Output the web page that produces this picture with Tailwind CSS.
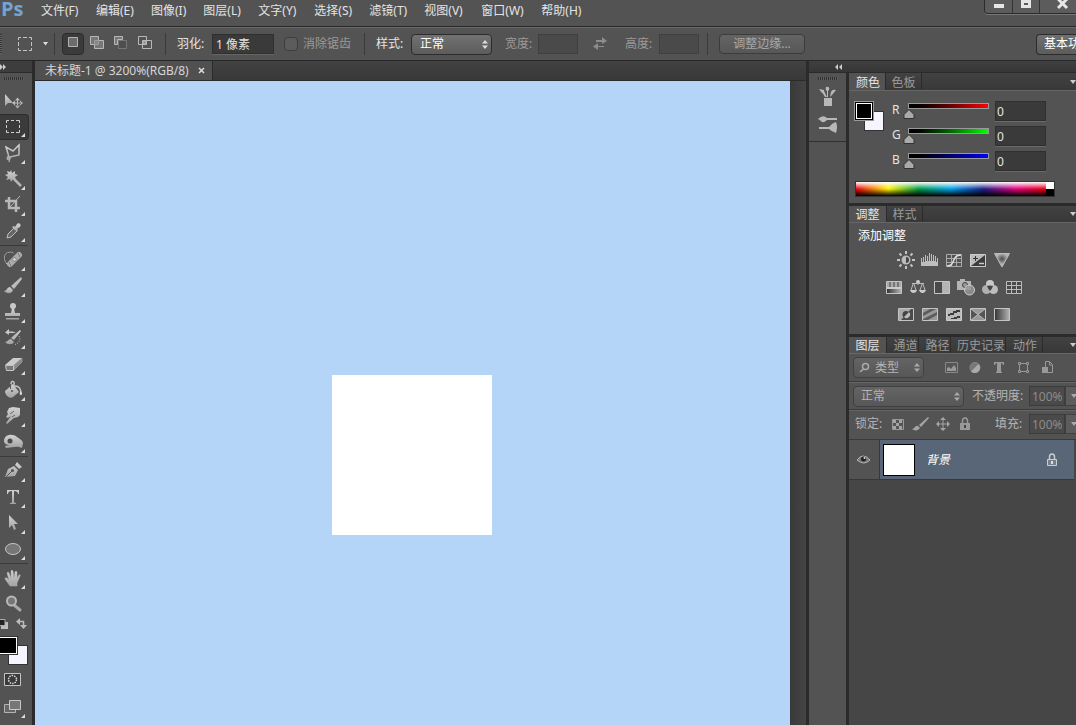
<!DOCTYPE html>
<html lang="zh-CN">
<head>
  <meta charset="UTF-8" />
  <meta name="viewport" content="width=device-width, initial-scale=1" />
  <title>未标题-1 @ 3200%(RGB/8)</title>
  <script src="https://cdn.jsdelivr.net/npm/@tailwindcss/browser@4"></script>
</head>
<body class="h-screen flex flex-col overflow-hidden bg-[#535353] text-[#e4e4e4] text-xs font-['Noto_Sans','Noto_Sans_CJK_SC',sans-serif]">

  <!-- Shared gradients for the icons -->
  <svg class="absolute size-0" aria-hidden="true">
    <defs>
      <linearGradient id="metal" x1="0" y1="0" x2="0" y2="1"><stop offset="0" stop-color="#d2d2d2" /><stop offset="1" stop-color="#a2a2a2" /></linearGradient>
      <linearGradient id="fade" x1="0" y1="0" x2="1" y2="0"><stop offset="0" stop-color="#333" /><stop offset="1" stop-color="#b4b4b4" /></linearGradient>
      <radialGradient id="vib" cx=".5" cy=".4"><stop offset="0" stop-color="#4a4a4a" /><stop offset=".8" stop-color="#b4b4b4" /></radialGradient>
    </defs>
  </svg>

  <!-- Menu bar -->
  <header class="flex h-[27px] shrink-0 border-b border-[#282828]">
    <div class="w-[41px] pl-px text-xl leading-[18px] font-bold text-[#75a3d3] font-['Open_Sans',sans-serif]">Ps</div>
    <nav class="flex items-center gap-[17px] pb-1 text-left whitespace-nowrap">
      <button class="min-w-[38px] text-left">文件(F)</button>
      <button class="min-w-[38px] text-left">编辑(E)</button>
      <button class="text-left">图像(I)</button>
      <button class="min-w-[38px] text-left">图层(L)</button>
      <button class="min-w-[39px] text-left">文字(Y)</button>
      <button class="min-w-[38px] text-left">选择(S)</button>
      <button class="min-w-[38px] text-left">滤镜(T)</button>
      <button class="min-w-10 text-left">视图(V)</button>
      <button class="min-w-[43px] text-left">窗口(W)</button>
      <button class="min-w-10 text-left">帮助(H)</button>
    </nav>
    <div class="ml-auto flex h-[14px] w-[92px] overflow-hidden rounded-bl border-b border-l border-[#2c2c2c] shadow-[0_1px_0_#777]">
      <button class="w-7 shrink-0 border-r border-[#333] bg-[#5c5c5c]" aria-label="最小化"><svg class="mx-auto" width="12" height="13"><path d="M1 4h10v4H1z" fill="#e6e6e6" /></svg></button>
      <button class="w-[27px] shrink-0 border-r border-[#333] bg-[#5c5c5c]" aria-label="最大化"><svg class="mx-auto" width="12" height="13"><path d="M1 0h10v8H1zM4 3v2h4V3z" fill="#e6e6e6" fill-rule="evenodd" /></svg></button>
      <button class="w-[46px] shrink-0 bg-[#5c5c5c]" aria-label="关闭"><svg class="mx-auto" width="12" height="13"><path d="M1 -1l9 9M10 -1l-9 9" stroke="#e6e6e6" stroke-width="3" /></svg></button>
    </div>
  </header>

  <!-- Options bar -->
  <section class="flex h-[34px] shrink-0 items-center border-t border-b border-t-[#6a6a6a] border-b-[#282828] whitespace-nowrap">
    <div class="h-5 w-[2px] bg-[repeating-linear-gradient(#333_0_1px,#666_1px_2px)]"></div>
    <svg class="ml-4" width="14" height="14" fill="none" stroke="#c4c4c4"><path d="M.5 3V.5H3M5 .5h4M11 .5h2.500V3M13.500 5v4M13.500 11v2.500H11M9 13.500H5M3 13.500H.5V11M.5 9V5" /></svg>
    <svg class="ml-[11px]" width="5" height="4"><path d="M0 0h5L2.500 3.500z" fill="#ddd" /></svg>
    <div class="ml-1.5 h-[22px] w-px bg-[#3a3a3a]"></div>
    <button class="ml-[7px] grid h-[22px] w-[22px] place-items-center rounded-sm border border-[#2c2c2c] bg-[#3b3b3b]" aria-label="新选区"><svg width="10" height="14"><path d="M.5 .5h9v9h-9z" fill="#6c6c6c" stroke="#b4b4b4" /></svg></button>
    <button class="ml-1.5 pb-0.5" aria-label="添加到选区"><svg width="14" height="14" stroke="#b8b8b8"><path d="M.5.5h8v4h5v8h-9v-4h-4z" fill="#777" /><path d="M4.500 8.500v-4h4v4z" fill="#888" stroke="#999" /></svg></button>
    <button class="ml-2.5 pb-0.5" aria-label="从选区减去"><svg width="14" height="14"><path d="M.5.500h8v3h-5v5h-3z" fill="#777" stroke="#b8b8b8" /><path d="M4.500 4.500h8v8h-8z" fill="#4e4e4e" stroke="#777" /></svg></button>
    <button class="ml-2.5 pb-0.5" aria-label="与选区交叉"><svg width="14" height="14" fill="none" stroke="#b8b8b8"><path d="M5 5h3v3H5z" fill="#888" /><path d="M.5.5h8v8h-8zM4.500 4.500h9v8h-9z" /></svg></button>
    <div class="ml-[13px] h-[22px] w-px bg-[#3a3a3a]"></div>
    <label for="feather" class="ml-[11px] w-[35px]">羽化:</label>
    <input id="feather" value="1 像素" class="h-5 w-[62px] border border-[#2f2f2f] bg-[#3a3a3a] px-[3px] shadow-[0_1px_0_#666]" />
    <input id="aa" type="checkbox" disabled class="ml-2.5 size-[14px] appearance-none rounded-sm border border-[#3c3c3c] bg-[#5c5c5c]" />
    <label for="aa" class="ml-[5px] w-[61px] text-[#9a9a9a]">消除锯齿</label>
    <div class="h-[22px] w-px bg-[#3a3a3a]"></div>
    <label for="style" class="ml-[11px] w-[35px]">样式:</label>
    <div class="relative">
      <select id="style" class="h-[21px] w-[81px] appearance-none rounded-sm border border-[#2c2c2c] bg-linear-to-b from-[#727272] to-[#5c5c5c] pl-2 text-white"><option>正常</option></select>
      <svg class="pointer-events-none absolute top-[6px] right-1" width="6" height="9" fill="#ddd"><path d="M0 3.500L3 0l3 3.500zM0 5.500h6L3 9z" /></svg>
    </div>
    <label for="w" class="ml-[13px] w-[33px] text-[#9a9a9a]">宽度:</label>
    <input id="w" disabled class="h-5 w-10 border border-[#404040] bg-[#4a4a4a]" />
    <button class="ml-[15px] pb-0.5" aria-label="交换高度和宽度"><svg width="14" height="13" fill="#8c8c8c"><path d="M3 3h6V0l5 4-5 3V5H3zM11 9H5V6L0 9.500 5 13v-3h6z" /></svg></button>
    <label for="h" class="ml-[18px] w-[34px] text-[#9a9a9a]">高度:</label>
    <input id="h" disabled class="h-5 w-10 border border-[#404040] bg-[#4a4a4a]" />
    <div class="ml-2 h-[22px] w-px bg-[#3a3a3a]"></div>
    <button class="ml-[11px] h-5 w-[86px] rounded-sm border border-[#3c3c3c] bg-linear-to-b from-[#646464] to-[#575757] leading-4 text-[#a8a8a8]">调整边缘...</button>
    <button class="ml-auto h-[21px] w-10 overflow-hidden rounded-l-sm border border-r-0 border-[#2c2c2c] bg-linear-to-b from-[#707070] to-[#5c5c5c] pl-[7px] text-left text-white">基本功</button>
  </section>

  <main class="flex min-h-0 flex-1">

    <!-- Toolbar -->
    <aside class="flex w-[35px] shrink-0 flex-col border-r-[3px] border-[#2b2b2b]">
      <div class="h-3 shrink-0 border-b border-[#2b2b2b] bg-[#3d3d3d] pt-[3px]"><svg width="7" height="6" fill="#ccc"><path d="M0 0l3 3-3 3zM3 0l3 3-3 3z" /></svg></div>
      <div class="h-[15px] shrink-0 pt-1 pl-1"><div class="h-[3px] w-5 bg-[repeating-linear-gradient(90deg,#303030_0_1px,#5e5e5e_1px_2px)]"></div></div>

      <button class="h-[26px] pt-0.5 pl-1" aria-label="移动工具"><svg width="22" height="22" viewBox="0 0 22 22"><path d="M1 3v12l3-3h5z" fill="url(#metal)" /><path d="M13.500 6.500l2.500 3h-5zM13.500 17.500l2.500-3h-5zM8 12l3-2.500v5zM19 12l-3-2.500v5zM10 11.500h7v1h-7zM13 8.500h1v7h-1z" fill="#bbb" /></svg></button>
      <button class="h-[26px] w-[29px] rounded-r-sm border border-l-0 border-[#2e2e2e] bg-[#3b3b3b] pl-1" aria-label="矩形选框工具"><svg width="22" height="22" viewBox="0 0 22 22"><path d="M2.500 7V4.500H5M7 4.500h3M12 4.500h3.500V7M15.500 9v3M15.500 14v2.500H12M10 16.500H7M5 16.500H2.500V14M2.500 12v-3" fill="none" stroke="#d0d0d0" /><path d="M21 17v4h-4z" fill="#ddd" /></svg></button>
      <button class="h-[26px] pt-0.5 pl-1" aria-label="多边形套索工具"><svg width="22" height="22" viewBox="0 0 22 22"><path d="M5 14L2 4l7 4 6-6v10l-9 2c-3 0-4 3-1 2s0-3-2-2m3 0l-1 5" fill="none" stroke="url(#metal)" stroke-width="1.500" /><path d="M21 17v4h-4z" fill="#ddd" /></svg></button>
      <button class="h-[26px] pt-0.5 pl-1" aria-label="魔棒工具"><svg width="22" height="22" viewBox="0 0 22 22"><path d="M7 1l1 3 3-2v3l3 1-3 2 1 3-3-1-2 3-1-3-4 1 2-3-3-2 3-1-1-3 3 1z" fill="url(#metal)" /><path d="M9 9l8 8" stroke="#b4b4b4" stroke-width="2.500" /><path d="M21 17v4h-4z" fill="#ddd" /></svg></button>
      <button class="h-[26px] pt-0.5 pl-1" aria-label="裁剪工具"><svg width="22" height="22" viewBox="0 0 22 22"><path d="M5 2v11h11M1 6h11v11" fill="none" stroke="#b8b8b8" stroke-width="2.500" /><path d="M16 1L6 12" stroke="#b8b8b8" /><path d="M21 17v4h-4z" fill="#ddd" /></svg></button>
      <button class="h-[26px] pt-0.5 pl-1" aria-label="吸管工具"><svg width="22" height="22" viewBox="0 0 22 22"><path d="M3 17l1-4 6-6 3 3-6 6z" fill="#666" stroke="#c0c0c0" /><path d="M8 6l2-1 1 1 2-3c2-2 5 1 3 3l-3 2 1 1-1 2z" fill="url(#metal)" /><path d="M21 17v4h-4z" fill="#ddd" /></svg></button>
      <div class="my-px h-px w-7 shrink-0 bg-[#3a3a3a]"></div>
      <button class="h-[26px] pt-0.5 pl-1" aria-label="污点修复画笔工具"><svg width="22" height="22" viewBox="0 0 22 22"><path d="M3 14C-1 10 0 3 4 2.500q4-1 6 1" fill="none" stroke="#ddd" stroke-dasharray="1 1" /><path d="M6 14L15 5" stroke="#aaa" stroke-width="6" stroke-linecap="round" /><path d="M8 9.500l2.500-2.500 2.500 2.500-2.500 2.500z" fill="#ccc" stroke="#808080" /><path d="M5 13h1M6 15h1M14 4h1M15 6h1" stroke="#555" /><path d="M21 17v4h-4z" fill="#ddd" /></svg></button>
      <button class="h-[26px] pt-0.5 pl-1" aria-label="画笔工具"><svg width="22" height="22" viewBox="0 0 22 22"><path d="M17 1l1 2-8 10-3-3z" fill="#bbb" /><path d="M0 15c3 0 3-4 6-4l3 3c-1 4-6 4-9 1z" fill="url(#metal)" /><path d="M21 17v4h-4z" fill="#ddd" /></svg></button>
      <button class="h-[26px] pt-0.5 pl-1" aria-label="仿制图章工具"><svg width="22" height="22" viewBox="0 0 22 22"><circle cx="9" cy="4" r="3" fill="#c8c8c8" /><path d="M8 6h2l1 5h5v3H1v-3h6zM2 16h13v1.500H2z" fill="url(#metal)" /><path d="M21 17v4h-4z" fill="#ddd" /></svg></button>
      <button class="h-[26px] pt-0.5 pl-1" aria-label="历史记录画笔工具"><svg width="22" height="22" viewBox="0 0 22 22"><path d="M5 1v2.500h4l3 1.500H5v2L1 4.500zM16 2l1 1-7 9-3-2zM1 14c3 0 3-3 6-3l3 3c-2 3-6 3-9 0z" fill="url(#metal)" /><path d="M15 8q3 6-5 9" fill="none" stroke="#ccc" stroke-dasharray="1 1.500" /><path d="M21 17v4h-4z" fill="#ddd" /></svg></button>
      <button class="h-[26px] pt-0.5 pl-1" aria-label="橡皮擦工具"><svg width="22" height="22" viewBox="0 0 22 22"><path d="M1 11L9 4h9l-8 7z" fill="#ccc" /><path d="M10 11l8-7v4l-8 8z" fill="#888" stroke="#bbb" stroke-width=".5" /><path d="M1.500 11.500h8v5h-7z" fill="#777" stroke="#c4c4c4" /><path d="M21 17v4h-4z" fill="#ddd" /></svg></button>
      <button class="h-[26px] pt-0.5 pl-1" aria-label="油漆桶工具"><svg width="22" height="22" viewBox="0 0 22 22"><path d="M1 11l8-7 6 8-6 5c-3 2-8-1-8-6z" fill="url(#metal)" /><path d="M7 11V4c0-4 4-3 3 0v4M11 6c4 0 6 2 6 8" fill="none" stroke="#c4c4c4" stroke-width="1.500" /><path d="M6.500 4v5" stroke="#555" /><circle cx="8" cy="11" r="1" fill="#555" /><path d="M17 11q2 4 0 4t-1-3z" fill="#ddd" /><path d="M21 17v4h-4z" fill="#ddd" /></svg></button>
      <button class="h-[26px] pt-0.5 pl-1" aria-label="涂抹工具"><svg width="22" height="22" viewBox="0 0 22 22"><path d="M3 6l2-4 4-1 7 1v7l-2 2-4 1-7 6-1-1 5-7-3 2-2-1 2-3z" fill="url(#metal)" /><path d="M6 8l4-3M8 11l3-2" stroke="#666" /><path d="M21 17v4h-4z" fill="#ddd" /></svg></button>
      <button class="h-[26px] pt-0.5 pl-1" aria-label="加深工具"><svg width="22" height="22" viewBox="0 0 22 22"><path d="M0 9c0-7 9-8 13-4 3 2 6 4 6 6l-1 5c-4-2-7-1-8-1l-8 1-1-2 5-1c-3 0-6-1-6-4z" fill="url(#metal)" /><circle cx="6" cy="9" r="2.500" fill="#4a4a4a" /><path d="M21 17v4h-4z" fill="#ddd" /></svg></button>
      <div class="my-px h-px w-7 shrink-0 bg-[#3a3a3a]"></div>
      <button class="h-[26px] pt-0.5 pl-1" aria-label="钢笔工具"><svg width="22" height="22" viewBox="0 0 22 22"><path d="M1 16l3-8 6-3 4 4-3 6zM11 4l2-3 5 5-3 2z" fill="url(#metal)" /><path d="M2 16l6-6" stroke="#555" /><circle cx="8.500" cy="9.500" r="1.500" fill="#555" /><path d="M21 17v4h-4z" fill="#ddd" /></svg></button>
      <button class="h-[26px] pt-0.5 pl-1" aria-label="横排文字工具"><svg width="22" height="22" viewBox="0 0 22 22"><path d="M3 3h12v4h-1q0-3-4-3v11q0 1 2 1v1H6v-1q2 0 2-1V4Q4 4 4 7H3z" fill="url(#metal)" /><path d="M21 17v4h-4z" fill="#ddd" /></svg></button>
      <button class="h-[26px] pt-0.5 pl-1" aria-label="路径选择工具"><svg width="22" height="22" viewBox="0 0 22 22"><path d="M5 2v13l3-3 2 5 2-1-2-5h4z" fill="url(#metal)" /><path d="M21 17v4h-4z" fill="#ddd" /></svg></button>
      <button class="h-[26px] pt-0.5 pl-1" aria-label="椭圆工具"><svg width="22" height="22" viewBox="0 0 22 22"><ellipse cx="9" cy="10" rx="7.500" ry="5.500" fill="#777" stroke="#c4c4c4" /><path d="M21 17v4h-4z" fill="#ddd" /></svg></button>
      <div class="my-px h-px w-7 shrink-0 bg-[#3a3a3a]"></div>
      <button class="h-[26px] pt-0.5 pl-1" aria-label="抓手工具"><svg width="22" height="22" viewBox="0 0 22 22"><path d="M6 18L1 11q0-2 2-1l2 2-2-7q1-2 2 0l2 5V3q1-2 2 0l1 7 1-6q1-2 2 0v6l2-3q2-1 1 1l-3 7v3z" fill="url(#metal)" stroke="#b0b0b0" stroke-width=".5" /><path d="M21 17v4h-4z" fill="#ddd" /></svg></button>
      <button class="h-[26px] pt-0.5 pl-1" aria-label="缩放工具"><svg width="22" height="22" viewBox="0 0 22 22"><path d="M10 11l6 5" stroke="#a8a8a8" stroke-width="3" stroke-linecap="round" /><circle cx="7.500" cy="7" r="4.500" fill="#777" stroke="#b8b8b8" stroke-width="2" /></svg></button>
      <div class="flex h-[19px] shrink-0 items-start gap-2">
        <button aria-label="默认颜色"><svg width="8" height="14"><path d="M1 5h7v7H1z" fill="#bbb" /><path d="M-1 2.500h6v6h-6z" fill="#222" stroke="#aaa" /></svg></button>
        <button aria-label="切换颜色"><svg width="11" height="14" fill="#bbb"><path d="M0 4.500L4 1v7zM11 8L7.500 12 4 8z" /><path d="M3 4.500h4.500V9" fill="none" stroke="#bbb" stroke-width="1.500" /></svg></button>
      </div>
      <!-- Foreground / background colours -->
      <div class="relative h-[30px] shrink-0">
        <div class="absolute top-[9px] left-2 size-5 border border-[#333] bg-[#f6f4fc]"></div>
        <div class="absolute top-0 left-0 h-[19px] w-[18px] border border-l-0 border-[#333] bg-white p-px pl-0"><div class="h-full bg-black"></div></div>
      </div>
      <button class="h-[28px] pl-1" aria-label="快速蒙版"><svg width="18" height="14"><path d="M.5.5h16v12H.5z" fill="#3a3a3a" stroke="#c4c4c4" /><circle cx="8.500" cy="6.500" r="4" fill="none" stroke="#ddd" stroke-width="1.500" stroke-dasharray="1.500 1" /></svg></button>
      <button class="h-[26px] pt-0.5 pl-1" aria-label="屏幕模式"><svg width="22" height="22" viewBox="0 0 22 22"><path d="M.5 7.500h11v8H.5z" fill="#666" stroke="#b4b4b4" /><path d="M5.500 3.500h11v9h-11z" fill="#777" stroke="#c8c8c8" /><path d="M21 17v4h-4z" fill="#ddd" /></svg></button>
    </aside>

    <!-- Document -->
    <section class="flex min-w-0 flex-1 flex-col">
      <div class="flex h-5 shrink-0 border-b border-[#2b2b2b] bg-linear-to-b from-[#424242] to-[#383838]">
        <div class="flex items-center gap-2 border-r border-[#2b2b2b] bg-[#505050] pr-1.5 pl-2.5 text-[#d6d6d6] whitespace-nowrap">
          <span>未标题-1 @ 3200%(RGB/8)</span>
          <button class="leading-none" aria-label="关闭文档"><svg width="9" height="7"><path d="M2 1l5 5M7 1L2 6" stroke="#ddd" stroke-width="1.500" /></svg></button>
        </div>
      </div>
      <div class="flex min-h-0 flex-1">
        <div class="flex-1 bg-[#b4d5f8] pt-[294px] pl-[297px]"><div class="size-40 bg-white"></div></div>
        <div class="w-4 bg-linear-to-r from-[#393939] to-[#454545]"></div>
      </div>
    </section>

    <!-- Right dock -->
    <aside class="flex w-[270px] shrink-0 flex-col border-l-[3px] border-[#2b2b2b]">
      <div class="h-3 shrink-0 border-b border-[#2b2b2b] bg-linear-to-b from-[#404040] to-[#363636] pt-[3px] pl-[26px]"><svg width="8" height="6" fill="#ccc"><path d="M3 0v6L0 3zM7 0v6L4 3z" /></svg></div>
      <div class="flex min-h-0 flex-1">
        <div class="w-[37px] shrink-0">
          <div class="flex h-[69px] flex-col items-center border-b border-[#303030] pt-1">
            <div class="h-[3px] w-5 bg-[repeating-linear-gradient(90deg,#303030_0_1px,#5e5e5e_1px_2px)]"></div>
            <button class="mt-1.5" aria-label="画笔预设"><svg width="18" height="21" fill="#b8b8b8"><path d="M5 12h8v8H5zM6 11L3 6l2-1 3 6zM7 1q4-1 3 3L9 5v6H8V5Q6 4 7 1zM17 4l-4 5-2 2 1-5q1-3 5-2zM0 3l5 1v3H3z" /></svg></button>
            <button class="mt-2" aria-label="画笔"><svg width="20" height="18" fill="#b8b8b8"><path d="M0 4q5-5 9-1h10v2H9q-4 4-6 1zM1 12h10q3-4 7-5 2 5 0 11-5-2-7-4H1z" /></svg></button>
          </div>
        </div>
        <div class="flex min-w-0 flex-1 flex-col border-l-[3px] border-[#2b2b2b]">

          <!-- Color panel -->
          <section class="h-[133px] shrink-0 border-b-[3px] border-[#2b2b2b]">
            <div class="flex h-[17px] bg-linear-to-b from-[#424242] to-[#383838] leading-[19px]">
              <button class="w-[37px] border-r border-[#2b2b2b] bg-[#535353] pl-0.5">颜色</button>
              <button class="w-9 border-r border-[#2b2b2b] text-[#9a9a9a]">色板</button>
              <button class="ml-auto" aria-label="面板菜单"><svg width="6" height="4"><path d="M0 0h6L3 4z" fill="#ccc" /></svg></button>
            </div>
            <div class="flex border-t border-[#666] pt-2.5 pl-[5px]">
              <div class="relative h-[76px] w-[38px]">
                <div class="absolute top-[10px] left-[10px] size-5 border border-[#333] bg-[#f6f4fc]"></div>
                <div class="absolute top-0 left-0 size-5 border border-[#999] bg-black p-px"><div class="h-full border border-white"></div></div>
              </div>
              <div class="flex flex-col gap-[5px]">
                <div class="flex h-5 items-start"><label for="r" class="w-4 leading-[18px]">R</label>
                  <div class="relative mt-0.5 h-[6px] w-[81px] border border-[#999] bg-linear-to-r from-black to-[#f00]"><svg class="absolute top-[5px] -left-[6px]" width="12" height="10"><path d="M6 .5l5 5v4H1v-4z" fill="#aaa" stroke="#333" /></svg></div>
                  <input id="r" value="0" class="ml-1.5 h-5 w-[51px] border border-[#2f2f2f] bg-[#3a3a3a] px-px shadow-[0_1px_0_#6a6a6a]" /></div>
                <div class="flex h-5 items-start"><label for="g" class="w-4 leading-[18px]">G</label>
                  <div class="relative mt-0.5 h-[6px] w-[81px] border border-[#999] bg-linear-to-r from-black to-[#0f0]"><svg class="absolute top-[5px] -left-[6px]" width="12" height="10"><path d="M6 .5l5 5v4H1v-4z" fill="#aaa" stroke="#333" /></svg></div>
                  <input id="g" value="0" class="ml-1.5 h-5 w-[51px] border border-[#2f2f2f] bg-[#3a3a3a] px-px shadow-[0_1px_0_#6a6a6a]" /></div>
                <div class="flex h-5 items-start"><label for="b" class="w-4 leading-[18px]">B</label>
                  <div class="relative mt-0.5 h-[6px] w-[81px] border border-[#999] bg-linear-to-r from-black to-[#00f]"><svg class="absolute top-[5px] -left-[6px]" width="12" height="10"><path d="M6 .5l5 5v4H1v-4z" fill="#aaa" stroke="#333" /></svg></div>
                  <input id="b" value="0" class="ml-1.5 h-5 w-[51px] border border-[#2f2f2f] bg-[#3a3a3a] px-px shadow-[0_1px_0_#6a6a6a]" /></div>
              </div>
            </div>
            <div class="mt-1 ml-1.5 flex h-4 w-[200px] border border-[#333]">
              <div class="flex-1 bg-[linear-gradient(#fff,#fff0_50%,#0000_50%,#000),linear-gradient(90deg,#e60012,#fff100_17%,#009944_33%,#00a0e9_50%,#1d2088_67%,#e4007f_84%,#e60012)]"></div>
              <div class="w-2 bg-[linear-gradient(#fff_50%,#000_50%)]"></div>
            </div>
          </section>

          <!-- Adjustments panel -->
          <section class="h-[131px] shrink-0 border-b-[3px] border-[#2b2b2b]">
            <div class="flex h-4 bg-linear-to-b from-[#424242] to-[#383838] leading-[18px]">
              <button class="w-[38px] border-r border-[#2b2b2b] bg-[#535353]">调整</button>
              <button class="w-9 border-r border-[#2b2b2b] text-[#9a9a9a]">样式</button>
              <button class="ml-auto" aria-label="面板菜单"><svg width="6" height="4"><path d="M0 0h6L3 4z" fill="#ccc" /></svg></button>
            </div>
            <div class="h-[29px] border-t border-[#666] pl-[9px] leading-[26px] text-white">添加调整</div>
            <div class="flex flex-col gap-[9px] pr-[17px]">
              <div class="flex justify-center gap-2">
                <button aria-label="亮度/对比度"><svg class="overflow-visible" width="16" height="18" viewBox="0 0 16 18"><circle cx="8" cy="9" r="4.500" fill="#bbb" /><path d="M8 6a3 3 0 010 6z" fill="#444" /><path d="M8 0v3M8 15v3M-1 9h3M14 9h3M1.500 2.500l2 2M12.500 13.500l2 2M14.500 2.500l-2 2M3.500 13.500l-2 2" stroke="#c4c4c4" stroke-width="2" /></svg></button>
                <button class="-mx-px" aria-label="色阶"><svg width="18" height="18" viewBox="0 0 18 18"><path d="M0 15V7h1v4h1V6h1v5h1V4h1v6h1V5h1v5h1V2h1v8h1V3h1v7h1V4h1v6h1V5h1v6h1V7h1v8z" fill="#bebebe" /></svg></button>
                <button aria-label="曲线"><svg width="16" height="18" viewBox="0 0 16 18"><path d="M.5 3.500h15v12H.5zM5.500 3v13M10.500 3v13M0 7.500h16M0 11.500h16" fill="none" stroke="#aaa" /><path d="M1 15c9 0 4-11 14-11" fill="none" stroke="#ddd" stroke-width="1.500" /></svg></button>
                <button aria-label="曝光度"><svg width="16" height="18" viewBox="0 0 16 18"><path d="M.5 3.500h15v12H.5z" fill="#bbb" stroke="#ccc" /><path d="M15 4v11H1z" fill="#3c3c3c" /><path d="M3 7.500h5M5.500 5v5" stroke="#333" /><path d="M9 12.500h5" stroke="#ccc" stroke-width="1.500" /></svg></button>
                <button aria-label="自然饱和度"><svg width="16" height="18" viewBox="0 0 16 18"><path d="M.5 2.500h15L8 16z" fill="url(#vib)" stroke="#bbb" /></svg></button>
              </div>
              <div class="flex justify-center gap-2">
                <button aria-label="色相/饱和度"><svg width="16" height="18" viewBox="0 0 16 18"><path d="M.5 3.500h15v12H.5z" fill="#aaa" stroke="#c4c4c4" /><path d="M1 9h14v2H1z" fill="#ccc" /><path d="M1 11h14v4H1z" fill="url(#fade)" /><path d="M4 4v5M8 4v5M12 4v5" stroke="#777" stroke-width="2" /></svg></button>
                <button aria-label="色彩平衡"><svg width="16" height="18" viewBox="0 0 16 18"><circle cx="8" cy="4" r="2" fill="#ccc" /><path d="M2 5.500h12M3.500 5L1 12M3.500 5L6 12M12.500 5L10 12M12.500 5L15 12M8 4v3" fill="none" stroke="#bbb" /><path d="M0 12h7q-1 3-3.500 3T0 12M9 12h7q-1 3-3.500 3T9 12" fill="#ccc" /></svg></button>
                <button aria-label="黑白"><svg width="16" height="18" viewBox="0 0 16 18"><path d="M.5 3.500h15v12H.5z" fill="#b4b4b4" stroke="#c4c4c4" /><path d="M1 4h7v11H1z" fill="#4a4a4a" /></svg></button>
                <button aria-label="照片滤镜"><svg class="overflow-visible" width="16" height="18" viewBox="0 0 16 18"><path d="M-1 3h3V1h5v2h6v9H-1z" fill="#b4b4b4" /><circle cx="7" cy="7" r="2.500" fill="#999" stroke="#444" /><circle cx="11.500" cy="12" r="5" fill="#999" fill-opacity=".8" stroke="#d0d0d0" /></svg></button>
                <button aria-label="通道混合器"><svg width="16" height="18" viewBox="0 0 16 18"><circle cx="8" cy="6" r="4" fill="#c8c8c8" /><circle cx="4.500" cy="11.500" r="4.500" fill="#b0b0b0" /><circle cx="11.500" cy="11.500" r="4.500" fill="#bcbcbc" /><path d="M5 8q3-1 6 0-1 3-3 5-2-2-3-5z" fill="#444" /></svg></button>
                <button aria-label="颜色查找"><svg width="16" height="18" viewBox="0 0 16 18"><path d="M.5 3.500h15v12H.5z" fill="#4a4a4a" stroke="#bbb" /><path d="M5.500 3v13M10.500 3v13M0 7.500h16M0 11.500h16" stroke="#bbb" /></svg></button>
              </div>
              <div class="flex justify-center gap-2">
                <button aria-label="反相"><svg width="16" height="18" viewBox="0 0 16 18"><path d="M.5 3.500h15v12H.5z" fill="#4a4a4a" stroke="#c4c4c4" /><path d="M1 15V4h12L3 15z" fill="#aaa" /><circle cx="8" cy="9.500" r="3.500" fill="#444" /><path d="M11 7a3.500 3.500 0 01-5 5z" fill="#bbb" /></svg></button>
                <button aria-label="色调分离"><svg width="16" height="18" viewBox="0 0 16 18"><path d="M.5 3.500h15v12H.5z" fill="#999" stroke="#c4c4c4" /><path d="M1 8l7-4h6L1 11zM1 14L15 7v3l-9 5H1z" fill="#5c5c5c" /></svg></button>
                <button aria-label="阈值"><svg width="16" height="18" viewBox="0 0 16 18"><path d="M.5 3.500h15v12H.5z" fill="#bbb" stroke="#ccc" /><path d="M2 9h2V8h3V6h3V5h4v2h-3v1H8v2H4v1H2zM5 13h3v-1h3v-1h3v2h-3v1H5z" fill="#3c3c3c" /></svg></button>
                <button aria-label="可选颜色"><svg width="16" height="18" viewBox="0 0 16 18"><path d="M.5 3.500h15v12H.5z" fill="#999" stroke="#c4c4c4" /><path d="M1 4l7 5.500L1 15zM15 4L8 9.500l7 5.500z" fill="#555" /><path d="M1 4l14 11M15 4L1 15" stroke="#bbb" /></svg></button>
                <button aria-label="渐变映射"><svg width="16" height="18" viewBox="0 0 16 18"><path d="M.5 3.500h15v12H.5z" fill="url(#fade)" stroke="#c4c4c4" /></svg></button>
              </div>
            </div>
          </section>

          <!-- Layers panel -->
          <section class="flex min-h-0 flex-1 flex-col text-[#b4b4b4]">
            <div class="flex h-4 shrink-0 bg-linear-to-b from-[#424242] to-[#383838] leading-[18px] text-[#9a9a9a] whitespace-nowrap">
              <button class="w-[38px] border-r border-[#2b2b2b] bg-[#535353] text-[#e4e4e4]">图层</button>
              <button class="w-8 border-r border-[#2b2b2b] pl-1.5">通道</button>
              <button class="w-8 border-r border-[#2b2b2b] pl-1.5">路径</button>
              <button class="w-[55px] border-r border-[#2b2b2b] pl-1.5">历史记录</button>
              <button class="w-[37px] border-r border-[#2b2b2b] pl-0.5">动作</button>
              <button class="ml-auto" aria-label="面板菜单"><svg width="6" height="4"><path d="M0 0h6L3 4z" fill="#ccc" /></svg></button>
            </div>
            <div class="flex h-[29px] shrink-0 items-center border-t border-b border-t-[#666] border-b-[#3a3a3a] pl-1">
              <div class="relative">
                <select aria-label="图层过滤" class="h-[21px] w-[71px] appearance-none rounded-sm border border-[#404040] bg-linear-to-b from-[#646464] to-[#575757] pl-[21px]"><option>类型</option></select>
                <svg class="pointer-events-none absolute top-[5px] left-[6px]" width="11" height="11" fill="none" stroke="#aaa" stroke-width="1.500"><circle cx="6.500" cy="4.500" r="3" /><path d="M4.500 7L1 10" /></svg>
                <svg class="pointer-events-none absolute top-[6px] right-1" width="6" height="9" fill="#aaa"><path d="M0 3.500L3 0l3 3.500zM0 5.500h6L3 9z" /></svg>
              </div>
              <div class="ml-5 flex gap-2">
                <button aria-label="像素图层"><svg width="16" height="16"><path d="M1.500 2.500h12v10h-12z" fill="#555" stroke="#888" /><path d="M3 11V8l2-1 2 2 3-4 2 3v3z" fill="#999" /></svg></button>
                <button aria-label="调整图层"><svg width="16" height="16"><circle cx="7" cy="7.500" r="5" fill="#777" stroke="#888" /><path d="M3 11.500L10.500 4a5 5 0 01-7.500 7.500z" fill="#aaa" /></svg></button>
                <button aria-label="文字图层"><svg width="16" height="16"><path d="M2 2h10v3h-1q0-2-2-2v8q0 1 1 1v1H4v-1q1 0 1-1V3Q3 3 3 5H2z" fill="#999" /></svg></button>
                <button aria-label="形状图层"><svg width="16" height="16" fill="none" stroke="#999"><path d="M2.500 2.500h2v2h-2zM10.500 2.500h2v2h-2zM2.500 10.500h2v2h-2zM10.500 10.500h2v2h-2zM5 3.500h5M5 11.500h5M3.500 5v5M11.500 5v5" /></svg></button>
                <button aria-label="智能对象"><svg width="16" height="16"><path d="M5.500 1.500h4l3 3v8h-7z" fill="#535353" stroke="#999" /><path d="M9.500 2v3H12" fill="none" stroke="#999" /><path d="M2 7h6v6H2z" fill="#999" /></svg></button>
              </div>
            </div>
            <div class="flex h-[28px] shrink-0 items-center border-t border-b border-t-[#666] border-b-[#3a3a3a] pl-1 whitespace-nowrap">
              <div class="relative">
                <select aria-label="混合模式" class="h-[21px] w-[111px] appearance-none rounded-sm border border-[#404040] bg-linear-to-b from-[#646464] to-[#575757] pl-[7px]"><option>正常</option></select>
                <svg class="pointer-events-none absolute top-[6px] right-1" width="6" height="9" fill="#aaa"><path d="M0 3.500L3 0l3 3.500zM0 5.500h6L3 9z" /></svg>
              </div>
              <label for="opacity" class="ml-2 w-[57px]">不透明度:</label>
              <input id="opacity" value="100%" class="h-5 w-9 border border-[#3c3c3c] bg-[#4a4a4a] px-[2px] text-[#8c8c8c]" />
              <button class="flex h-5 flex-1 items-center overflow-hidden border border-r-0 border-[#404040] bg-[#5c5c5c] pl-[5px]" aria-label="不透明度选项"><svg class="shrink-0" width="6" height="4"><path d="M0 0h6L3 4z" fill="#aaa" /></svg></button>
            </div>
            <div class="flex h-[30px] shrink-0 items-center border-t border-b border-t-[#666] border-b-[#3a3a3a] pb-0.5 pl-1.5 whitespace-nowrap">
              <span class="w-[35px]">锁定:</span>
              <div class="flex gap-1.5">
                <button aria-label="锁定透明像素"><svg width="16" height="16"><path d="M2.500 3.500h11v10h-11z" fill="#555" stroke="#999" /><path d="M3 4h3v3h3V4h3v3H9v3h3v3H9v-3H6v3H3v-3h3V7H3z" fill="#a4a4a4" /></svg></button>
                <button aria-label="锁定图像像素"><svg width="17" height="16"><path d="M16 1l1 1-8 9-2-2zM0 13c3 0 3-4 6-3l2 2c-2 3-6 3-8 1z" fill="#a4a4a4" /></svg></button>
                <button aria-label="锁定位置"><svg width="16" height="16" fill="#a4a4a4"><path d="M8 1l3 3H5zM8 15l3-3H5zM1 8l3-3v6zM15 8l-3-3v6zM4 7.500h8v1H4zM7.500 4h1v8h-1z" /></svg></button>
                <button aria-label="锁定全部"><svg width="16" height="16"><path d="M5.500 8V5q0-3 2.500-3t2.500 3v3" fill="none" stroke="#999" stroke-width="1.500" /><path d="M3 7h10v7H3z" fill="#999" /><path d="M8 9v3" stroke="#444" stroke-width="2" /></svg></button>
              </div>
              <label for="fill" class="ml-[22px] w-[34px]">填充:</label>
              <input id="fill" value="100%" class="h-5 w-9 border border-[#3c3c3c] bg-[#4a4a4a] px-[2px] text-[#8c8c8c]" />
              <button class="flex h-5 flex-1 items-center overflow-hidden border border-r-0 border-[#404040] bg-[#5c5c5c] pl-[5px]" aria-label="填充选项"><svg class="shrink-0" width="6" height="4"><path d="M0 0h6L3 4z" fill="#aaa" /></svg></button>
            </div>
            <div class="flex-1 bg-[#464646] pr-0.5">
              <div class="flex h-10 items-center border-b border-[#383838] bg-[#586677]">
                <button class="grid h-full w-[31px] place-items-center border-r border-[#383838] bg-[#535353] pb-0.5" aria-label="可见性"><svg width="14" height="10"><path d="M0 6q6-8 13 0-6 6-13 0z" fill="#777" stroke="#b4b4b4" /><circle cx="6.500" cy="5" r="2.500" fill="#222" /><circle cx="7.500" cy="4" r="1" fill="#ddd" /></svg></button>
                <div class="ml-[3px] size-8 border border-black bg-white"></div>
                <span class="ml-[11px] text-white italic">背景</span>
                <svg class="mr-4 ml-auto" width="12" height="14"><path d="M3.500 6V4q0-3 2.500-3t2.500 3v2" fill="none" stroke="#ccc" stroke-width="1.500" /><path d="M1.500 6.500h9v6h-9z" fill="#777f8a" stroke="#ccc" /><path d="M6 8v3" stroke="#ddd" stroke-width="2" /></svg>
              </div>
            </div>
          </section>
        </div>
      </div>
    </aside>
  </main>
</body>
</html>
